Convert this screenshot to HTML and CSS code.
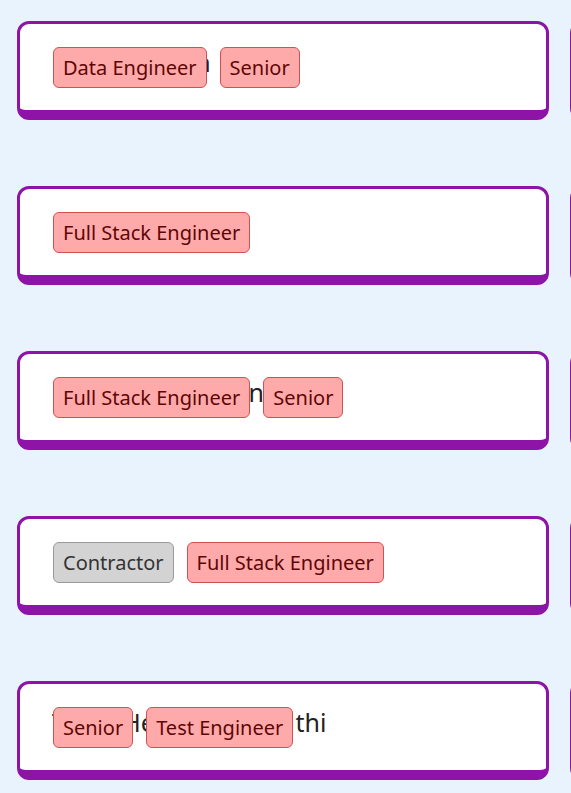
FILE: index.html
```html
<!DOCTYPE html>
<html>
  <head>
    <title>Projects</title>
    <link rel="stylesheet" href="styles.css">
  </head>
  <body>
    <div class="board">

      <div class="card">
        <div class="card-body">
          <div class="title">Data Solution</div>
          <div class="tags">
            <span class="tag">Data Engineer</span>
            <span class="tag">Senior</span>
          </div>
        </div>
      </div>
      <div class="card">
        <div class="card-body">
          <div class="title">Search Index</div>
          <div class="tags">
            <span class="tag">Backend Engineer</span>
          </div>
        </div>
      </div>

      <div class="card">
        <div class="card-body">
          <div class="title">Checkout Flow</div>
          <div class="tags">
            <span class="tag">Full Stack Engineer</span>
          </div>
        </div>
      </div>
      <div class="card">
        <div class="card-body">
          <div class="title">Mobile App</div>
          <div class="tags">
            <span class="tag">iOS Engineer</span>
          </div>
        </div>
      </div>

      <div class="card">
        <div class="card-body">
          <div class="title">Booking Redesign</div>
          <div class="tags">
            <span class="tag">Full Stack Engineer</span>
            <span class="tag">Senior</span>
          </div>
        </div>
      </div>
      <div class="card">
        <div class="card-body">
          <div class="title">Design System</div>
          <div class="tags">
            <span class="tag">Frontend Engineer</span>
          </div>
        </div>
      </div>

      <div class="card">
        <div class="card-body">
          <div class="title">Payments</div>
          <div class="tags">
            <span class="tag tag-grey">Contractor</span>
            <span class="tag">Full Stack Engineer</span>
          </div>
        </div>
      </div>
      <div class="card">
        <div class="card-body">
          <div class="title">Billing</div>
          <div class="tags">
            <span class="tag">Backend Engineer</span>
          </div>
        </div>
      </div>

      <div class="card">
        <div class="card-body">
          <div class="title">Team Health Checks thi</div>
          <div class="tags">
            <span class="tag">Senior</span>
            <span class="tag">Test Engineer</span>
          </div>
        </div>
      </div>
      <div class="card">
        <div class="card-body">
          <div class="title">Release Pipeline</div>
          <div class="tags">
            <span class="tag">DevOps Engineer</span>
          </div>
        </div>
      </div>

    </div>
  </body>
</html>
```

FILE: styles.css
```css
/* page */
html, body {
  margin: 0;
  overflow: hidden;
}

body {
  background-color: #e9f3fe;
  font-family: "Noto Sans", "Open Sans", sans-serif;
}

/* two columns of cards, the second one runs off the page */
.board {
  display: grid;
  grid-template-columns: 532px 532px;
  column-gap: 21px;
  row-gap: 66px;
  padding: 21px 0 0 17px;
  width: max-content;
}

.card {
  box-sizing: border-box;
  height: 99px;
  background-color: #ffffff;
  border: 3px solid #8e14a8;
  border-bottom-width: 10px;
  border-radius: 12px;
  padding: 21px 32px 0 32px;
}

.card-body {
  position: relative;
}

.title {
  font-size: 25px;
  line-height: 34px;
  color: #222222;
  white-space: nowrap;
}

/* tags sit on top of the title */
.tags {
  position: absolute;
  top: 2px;
  left: 1px;
  display: flex;
  gap: 13px;
}

.tag {
  display: inline-block;
  font-size: 20px;
  line-height: 27px;
  padding: 6px 9px;
  border: 1px solid #cf5252;
  border-radius: 6px;
  background-color: #ffaaaa;
  color: #5e0606;
  white-space: nowrap;
}

.tag-grey {
  background-color: #d3d3d3;
  border-color: #999999;
  color: #333333;
}
```
